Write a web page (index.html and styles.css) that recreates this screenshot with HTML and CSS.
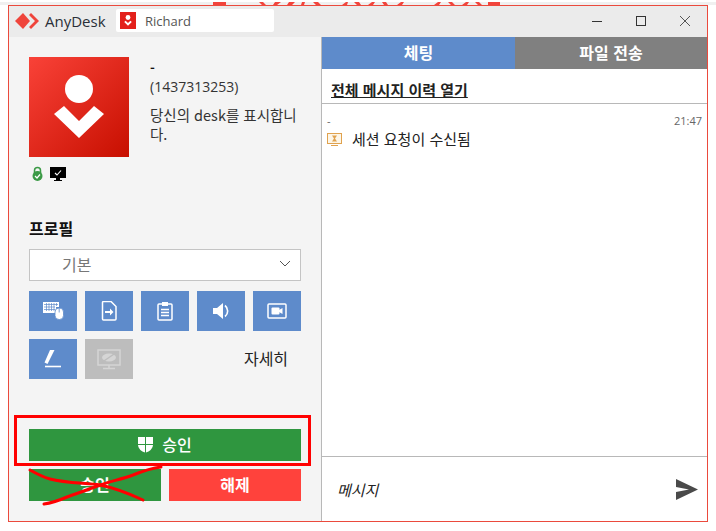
FILE: index.html
```html
<!DOCTYPE html>
<html lang="ko">
<head>
<meta charset="utf-8">
<title>AnyDesk</title>
<link rel="stylesheet" href="styles.css">
</head>
<body>
<div class="top-strip">
  <svg class="scribble" width="290" height="3" viewBox="0 0 290 3" fill="#f2443c">
    <path d="M0 0H13V3H0Z"/>
    <path d="M46 0H50L53 3H49Z M62 0H68L64 3H60Z M76 0H82L79 3H74Z M89 0H92L91 3H88Z M100 0H105L108 3H103Z"/>
    <path d="M129 3L133 0H135L134 3Z M141 0H146L148 3H144Z M155 3L159 0H162L160 3Z M169 0H173L175 3H171Z M184 3L188 0H191L189 3Z"/>
    <path d="M221 3L225 0H228L226 3Z M235 0H239L242 3H238Z M249 3L253 0H256L254 3Z M262 0H266L269 3H265Z M275 0H287V3H275Z"/>
  </svg>
</div>
<div class="window">
  <header class="titlebar">
    <div class="brand">
      <svg class="brand-mark" width="24" height="16" viewBox="0 0 24 16"><path d="M0 8L8 0L15 8L8 16Z" fill="#ef443b"/><path d="M14 2L16 0L24 8L16 16L14 14L20 8Z" fill="#ef443b"/></svg>
      <span class="brand-name">AnyDesk</span>
    </div>
    <div class="session-tab">
      <svg class="tab-avatar" width="16" height="17" viewBox="0 0 16 17"><rect width="16" height="17" fill="#e3201b"/><circle cx="8" cy="5.500" r="2.400" fill="#fff"/><path d="M4.200 10L8 13.800L11.800 10L10.400 8.800L8 11L5.600 8.800Z" fill="#fff"/></svg>
      <span class="tab-name">Richard</span>
    </div>
    <div class="win-controls">
      <svg width="12" height="12" viewBox="0 0 12 12"><path d="M1 6.500H11" stroke="#333" stroke-width="1"/></svg>
      <svg width="12" height="12" viewBox="0 0 12 12"><rect x="1.500" y="1.500" width="9" height="9" fill="none" stroke="#333"/></svg>
      <svg width="12" height="12" viewBox="0 0 12 12"><path d="M1 1L11 11M11 1L1 11" stroke="#555" stroke-width="1"/></svg>
    </div>
  </header>
  <div class="body">
    <aside class="left">
      <div class="profile-head">
        <div class="avatar-col">
          <svg class="avatar" width="100" height="100" viewBox="0 0 100 100">
            <defs><linearGradient id="ag" x1="0" y1="0" x2="1" y2="1"><stop offset="0" stop-color="#f94238"/><stop offset="1" stop-color="#c70f00"/></linearGradient></defs>
            <rect width="100" height="100" fill="url(#ag)"/>
            <circle cx="50" cy="32" r="14" fill="#fff"/>
            <path d="M25 57L50 81L75 57L65 49L50 64L35 49Z" fill="#fff"/>
          </svg>
          <div class="status-icons">
            <svg width="11" height="16" viewBox="0 0 11 16"><path d="M2.500 7V4.500a3 3 0 0 1 6 0V7" fill="none" stroke="#3b9a46" stroke-width="1.500"/><circle cx="5.500" cy="10" r="5" fill="#3b9a46"/><path d="M3 10L5 12L8 8.500" fill="none" stroke="#fff" stroke-width="1.200"/></svg>
            <svg width="16" height="15" viewBox="0 0 16 15"><rect width="16" height="11" fill="#000"/><rect x="6" y="11" width="4" height="2" fill="#000"/><rect x="4" y="13" width="8" height="1" fill="#000"/><path d="M5 6L7 8L11 3.500" fill="none" stroke="#fff" stroke-width="1.100"/></svg>
          </div>
        </div>
        <div class="info">
          <div class="alias">-</div>
          <div class="desk-id">(1437313253)</div>
          <p class="desc">당신의 desk를 표시합니다.</p>
        </div>
      </div>
      <h2 class="section-title">프로필</h2>
      <div class="select"><span>기본</span>
        <svg width="12" height="7" viewBox="0 0 12 7"><path d="M1 1L6 6L11 1" fill="none" stroke="#555" stroke-width="1"/></svg>
      </div>
      <div class="perm-grid">
        <button class="perm"><svg width="21" height="18" viewBox="0 0 21 18"><path d="M0 0H16V5H13V11H0Z" fill="#fff"/><path d="M1 2.500H15M1 5H12M1 7.500H12M3.500 1V9M6 1V9M8.500 1V9M11 1V9M13.500 1V4" stroke="#5e8bcb" stroke-width=".7" fill="none"/><rect x="12" y="6" width="8.500" height="11.500" rx="4" fill="#fff" stroke="#5e8bcb" stroke-width=".8"/><path d="M16.200 6V10.500" stroke="#5e8bcb" stroke-width=".8"/></svg></button>
        <button class="perm"><svg width="16" height="20" viewBox="0 0 16 20"><path d="M1.500 1.500a1 1 0 0 1 1-1H10L15 5.500V18a1 1 0 0 1-1 1H2.500a1 1 0 0 1-1-1Z" fill="none" stroke="#fff" stroke-width="1.500"/><path d="M4 10H9V7.500L12.500 11L9 14.500V12H4Z" fill="#fff"/></svg></button>
        <button class="perm"><svg width="16" height="20" viewBox="0 0 16 20"><rect x="1" y="3" width="14" height="16" rx="1" fill="none" stroke="#fff" stroke-width="1.500"/><rect x="5" y="1" width="6" height="4" fill="#fff"/><path d="M4 8.500H12M4 11.500H12M4 14.500H12" stroke="#fff" stroke-width="1.500"/></svg></button>
        <button class="perm"><svg width="17" height="18" viewBox="0 0 17 18"><path d="M0 6H4L10 1V17L4 12H0Z" fill="#fff"/><path d="M12 3.500a7 7 0 0 1 0 11" fill="none" stroke="#fff" stroke-width="1.600"/></svg></button>
        <button class="perm"><svg width="20" height="16" viewBox="0 0 20 16"><rect x="1" y="1" width="18" height="14" rx="1" fill="none" stroke="#fff" stroke-width="1.500"/><rect x="4.500" y="4.500" width="8" height="7" rx="1" fill="#fff"/><path d="M12 7L15.500 5V11L12 9Z" fill="#fff"/></svg></button>
        <button class="perm"><svg width="18" height="18" viewBox="0 0 18 18"><path d="M6 0H10.500L3.500 14L.5 12.500Z" fill="#fff"/><path d="M1 16.500H17" stroke="#fff" stroke-width="1.600"/></svg></button>
        <button class="perm perm-off"><svg width="24" height="21" viewBox="0 0 24 21"><rect x="1" y="1" width="22" height="15" fill="none" stroke="#d5d5d5" stroke-width="1.500"/><path d="M12 16V19M6 19.500H18" stroke="#d5d5d5" stroke-width="1.500"/><ellipse cx="12" cy="8.500" rx="7" ry="4" fill="#d5d5d5"/><path d="M4 14L20 3" stroke="#bdbdbd" stroke-width="1.500"/></svg></button>
        <span class="more">자세히</span>
      </div>
      <div class="actions">
        <button class="btn btn-wide">
          <svg width="15" height="16" viewBox="0 0 15 16"><path d="M0 0H7V7H0ZM8 0H15V7H8ZM0 8H7V15.500C3.500 14.500 .5 12 0 8ZM8 8H15C14.500 12 11.500 14.500 8 15.500Z" fill="#fff"/></svg>
          <span class="btn-label">승인</span>
        </button>
        <div class="btn-row">
          <button class="btn btn-half"><span class="btn-label">승인</span></button>
          <button class="btn btn-half btn-red"><span class="btn-label">해제</span></button>
        </div>
      </div>
    </aside>
    <main class="right">
      <div class="tabs">
        <div class="tab tab-on">체팅</div>
        <div class="tab tab-off">파일 전송</div>
      </div>
      <div class="history"><a>전체 메시지 이력 열기</a></div>
      <div class="chat">
        <div class="meta"><span>-</span><span>21:47</span></div>
        <div class="msg">
          <svg width="15" height="13" viewBox="0 0 15 13"><rect x=".5" y=".5" width="14" height="10" fill="#fdf6e8" stroke="#e0a24e"/><path d="M5 2.500H10L8 5.500L10 8.500H5L7 5.500Z" fill="#e0a24e"/><path d="M4 12.500H11" stroke="#e0a24e"/></svg>
          <span>세션 요청이 수신됨</span>
        </div>
      </div>
      <div class="composer">
        <span class="placeholder">메시지</span>
        <svg width="22" height="21" viewBox="0 0 22 21"><path d="M0 0L22 10.500L0 21V13L13 10.500L0 8Z" fill="#4a4a4a"/></svg>
      </div>
    </main>
  </div>
</div>
<svg class="annotation" width="716" height="531" viewBox="0 0 716 531">
  <rect x="15.500" y="416.500" width="294" height="48" fill="none" stroke="#f00" stroke-width="3"/>
  <path d="M30 470C37 474 43 477 50 479C65 483 85 483 100 485C115 488 130 494 143 500" fill="none" stroke="#f00" stroke-width="3" stroke-linecap="round"/>
  <path d="M44 504C52 503 60 500 67 497C78 493 90 489 100 485C112 481 122 479 133 475C143 471 152 468 161 467" fill="none" stroke="#f00" stroke-width="3" stroke-linecap="round"/>
</svg>
</body>
</html>
```
FILE: styles.css
```css
* { box-sizing: border-box; }
html, body { margin: 0; padding: 0; }
body {
  width: 716px;
  height: 531px;
  background: #fff;
  position: relative;
  overflow: hidden;
  padding-top: 2px;
  font-family: "Noto Sans CJK KR", "Noto Sans", sans-serif;
  color: #222;
}
.top-strip { height: 3px; padding-left: 213px; background: #f0f0f0; }
.scribble { display: block; }
.window {
  width: 700px;
  height: 517px;
  margin-left: 8px;
  border: 1px solid #eb4a3d;
  display: flex;
  flex-direction: column;
}
.titlebar {
  height: 31px;
  flex: none;
  background: #ebebeb;
  display: flex;
  align-items: center;
  padding: 0 0 2px 6px;
}
.brand { display: flex; align-items: center; gap: 6px; width: 101px; }
.brand-name { font-family: "Open Sans", sans-serif; font-size: 15px; color: #2a2f38; }
.session-tab {
  width: 158px;
  height: 23px;
  background: #fff;
  border-radius: 2px;
  display: flex;
  align-items: center;
  padding-left: 4px;
  gap: 9px;
}
.tab-name { font-family: "Open Sans", sans-serif; font-size: 13px; color: #555; }
.win-controls { margin-left: auto; display: flex; gap: 32px; padding-right: 16px; }
.body { flex: 1; display: flex; min-height: 0; }
.left {
  width: 313px;
  flex: none;
  background: #f4f4f4;
  border-right: 1px solid #b8b8b8;
  padding: 20px 20px 0;
  display: flex;
  flex-direction: column;
}
.profile-head { display: flex; gap: 21px; height: 159px; }
.avatar-col { width: 100px; flex: none; }
.avatar { display: block; }
.status-icons { display: flex; align-items: center; gap: 7px; padding: 9px 3px 0; }
.status-icons svg { display: block; }
.info { width: 153px; font-size: 14.500px; line-height: 19px; color: #333; padding-top: 1px; }
.alias { font-weight: 700; font-size: 13px; color: #111; }
.desk-id { font-family: "Open Sans", sans-serif; font-size: 14px; }
.desc { margin: 9px 0 0; line-height: 19px; }
.section-title { margin: 0; font-size: 16px; line-height: 20px; font-weight: 700; color: #111; padding-top: 2px; height: 33px; }
.select {
  width: 272px;
  height: 32px;
  border: 1px solid #c4c4c4;
  background: #fff;
  display: flex;
  align-items: center;
  justify-content: space-between;
  padding: 0 9px 3px 32px;
  font-size: 16px;
  color: #777;
}
.perm-grid {
  width: 272px;
  margin-top: 10px;
  display: grid;
  grid-template-columns: repeat(5, 48px);
  grid-auto-rows: 40px;
  gap: 8px;
}
.perm {
  border: 0;
  padding: 0;
  background: #5e8bcb;
  display: flex;
  align-items: center;
  justify-content: center;
}
.perm-off { background: #bdbdbd; }
.more { grid-column: 4 / 6; align-self: center; justify-self: center; font-size: 16px; color: #222; padding: 0 0 3px 34px; }
.actions { margin-top: 50px; width: 272px; display: flex; flex-direction: column; gap: 8px; }
.btn {
  border: 0;
  height: 32px;
  background: #2f963f;
  color: #fff;
  font-family: inherit;
  font-size: 16px;
  font-weight: 700;
  display: flex;
  align-items: center;
  justify-content: center;
  padding: 0;
}
.btn-label { padding-bottom: 3px; }
.btn-wide { gap: 9px; font-weight: 500; }
.btn-row { display: flex; gap: 8px; }
.btn-half { width: 132px; }
.btn-red { background: #ff423c; }
.right { flex: 1; min-width: 0; display: flex; flex-direction: column; background: #fff; }
.tabs { display: flex; height: 32px; flex: none; }
.tab { flex: none; display: flex; align-items: center; justify-content: center; color: #fff; font-size: 16px; font-weight: 700; padding-bottom: 2px; }
.tab-on { width: 193px; background: #5e8bcb; }
.tab-off { flex: 1; background: #808080; }
.history { height: 35px; flex: none; border-bottom: 1px solid #b8b8b8; padding: 11px 0 0 9px; font-size: 15px; line-height: 20px; font-weight: 700; color: #222; }
.history a { text-decoration: underline; }
.chat { flex: 1; padding: 9px 5px 0; }
.meta { display: flex; justify-content: space-between; font-size: 11px; line-height: 16px; color: #666; font-family: "Open Sans", "Noto Sans CJK KR", sans-serif; }
.msg { display: flex; align-items: center; gap: 10px; font-size: 15px; line-height: 20px; color: #222; }
.composer {
  height: 65px;
  flex: none;
  border-top: 1px solid #b8b8b8;
  display: flex;
  align-items: center;
  justify-content: space-between;
  padding: 0 9px 0 15px;
}
.placeholder { font-style: italic; font-size: 15px; color: #222; }
.annotation { position: absolute; left: 0; top: 0; pointer-events: none; }
```
